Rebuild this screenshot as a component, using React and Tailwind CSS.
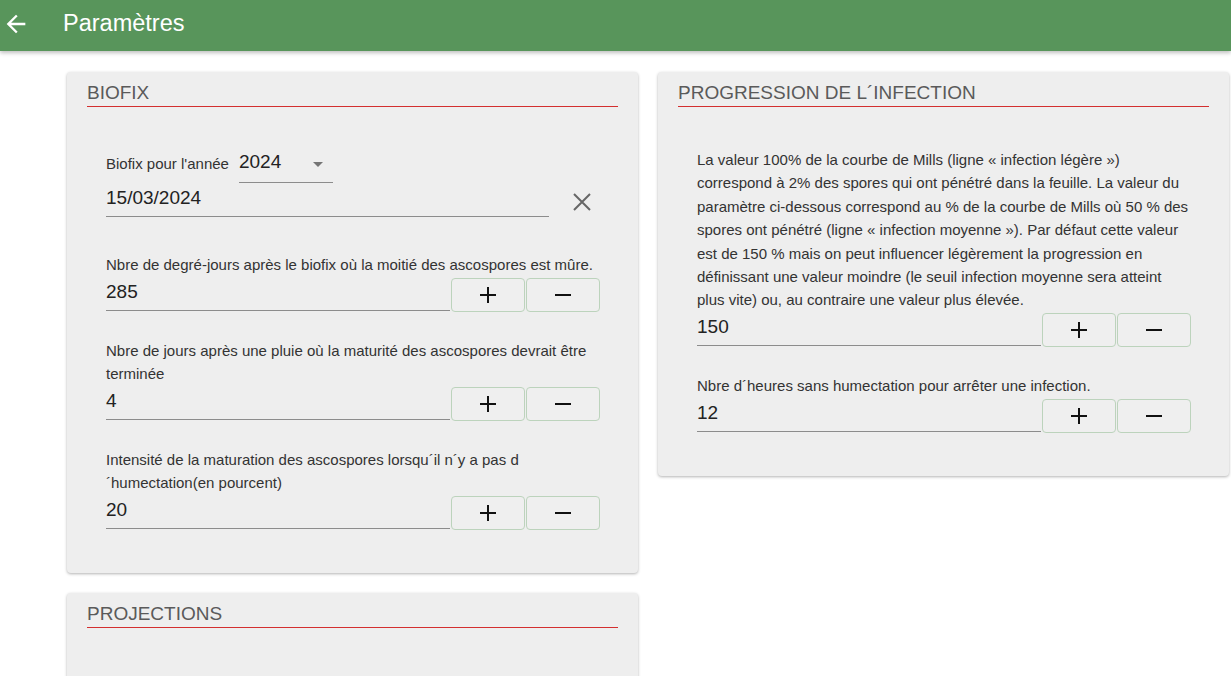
import React from "react";

const font = { fontFamily: '"Liberation Sans", Arial, sans-serif' };

function PlusIcon() {
  return (
    <svg width="18" height="18" viewBox="0 0 18 18">
      <path d="M9 1v16M1 9h16" stroke="#111" strokeWidth="2" fill="none" />
    </svg>
  );
}

function MinusIcon() {
  return (
    <svg width="18" height="18" viewBox="0 0 18 18">
      <path d="M1 9h16" stroke="#111" strokeWidth="2" fill="none" />
    </svg>
  );
}

function Card({ title, children, className = "" }) {
  return (
    <div className={"bg-[#eeeeee] rounded shadow-[0_1px_3px_rgba(0,0,0,0.3)] " + className}>
      <div className="px-5 pt-2">
        <div className="text-[19px] leading-[26px] text-[#5a5a5a] border-b border-[#d32f2f]">{title}</div>
      </div>
      {children}
    </div>
  );
}

function NumberField({ label, value, className = "" }) {
  return (
    <div className={className}>
      {label && <div className="text-[15px] leading-[23px] text-[#333]">{label}</div>}
      <div className="flex mt-[2px] gap-px">
        <div className="flex-1 h-[33px] border-b border-[#8c8c8c] flex items-center pb-[3px] text-[19px] text-[#222]">
          {value}
        </div>
        <button className="w-[74px] h-[34px] rounded border border-[#bcd3bc] bg-[#efefef] flex items-center justify-center">
          <PlusIcon />
        </button>
        <button className="w-[74px] h-[34px] rounded border border-[#bcd3bc] bg-[#efefef] flex items-center justify-center">
          <MinusIcon />
        </button>
      </div>
    </div>
  );
}

export default function App() {
  return (
    <div className="min-h-screen bg-white" style={font}>
      {/* Barre du haut */}
      <header className="h-[51px] bg-[#58955b] flex items-center shadow-[0_2px_4px_rgba(0,0,0,0.25)] relative">
        <svg className="ml-[2px] mb-[3px]" width="28" height="28" viewBox="0 0 24 24" fill="#fff">
          <path d="M20 11H7.83l5.59-5.59L12 4l-8 8 8 8 1.41-1.41L7.83 13H20v-2z" />
        </svg>
        <h1 className="ml-[33px] mb-[3px] text-[23.5px] text-white leading-none">Paramètres</h1>
      </header>

      <main className="flex gap-5 pl-[67px] pr-[2px] pt-[21px]">
        {/* Colonne gauche */}
        <div className="w-[571px] flex flex-col gap-5">
          <Card title="BIOFIX">
            <div className="pl-[39px] pr-[38px] pt-[39px] pb-[43px]">
              <div className="flex items-end">
                <span className="text-[15px] leading-4 text-[#333] mb-[11px] mr-[10px]">Biofix pour l'année</span>
                <div className="w-[94px] h-[37px] border-b border-[#8c8c8c] flex items-center justify-between pr-[10px] pb-1">
                  <span className="text-[19px] text-[#222]">2024</span>
                  <svg width="10" height="5" viewBox="0 0 10 5" className="mt-1">
                    <path d="M0 0h10L5 5z" fill="#757575" />
                  </svg>
                </div>
              </div>
              <div className="flex items-center">
                <div className="w-[443px] h-[34px] border-b border-[#8c8c8c] flex items-center pb-[2px] text-[19px] text-[#222]">
                  15/03/2024
                </div>
                <svg className="ml-[23px] mt-1" width="20" height="20" viewBox="0 0 20 20">
                  <path d="M2 2l16 16M18 2L2 18" stroke="#666" strokeWidth="2" fill="none" />
                </svg>
              </div>

              <NumberField
                className="mt-[36px]"
                label="Nbre de degré-jours après le biofix où la moitié des ascospores est mûre."
                value="285"
              />
              <NumberField
                className="mt-[27px]"
                label="Nbre de jours après une pluie où la maturité des ascospores devrait être terminée"
                value="4"
              />
              <NumberField
                className="mt-[27px]"
                label="Intensité de la maturation des ascospores lorsqu´il n´y a pas d ´humectation(en pourcent)"
                value="20"
              />
            </div>
          </Card>

          <Card title="PROJECTIONS" className="h-[200px]" />
        </div>

        {/* Colonne droite */}
        <div className="w-[571px]">
          <Card title="PROGRESSION DE L´INFECTION">
            <div className="pl-[39px] pr-[38px] pt-[41px] pb-[43px]">
              <p className="text-[15px] leading-[23.4px] text-[#333]">
                La valeur 100% de la courbe de Mills (ligne « infection légère ») correspond à 2% des spores qui
                ont pénétré dans la feuille. La valeur du paramètre ci-dessous correspond au % de la courbe de
                Mills où 50 % des spores ont pénétré (ligne « infection moyenne »). Par défaut cette valeur est de
                150 % mais on peut influencer légèrement la progression en définissant une valeur moindre (le
                seuil infection moyenne sera atteint plus vite) ou, au contraire une valeur plus élevée.
              </p>
              <NumberField className="-mt-[1px]" value="150" />
              <NumberField
                className="mt-[27px]"
                label="Nbre d´heures sans humectation pour arrêter une infection."
                value="12"
              />
            </div>
          </Card>
        </div>
      </main>
    </div>
  );
}
